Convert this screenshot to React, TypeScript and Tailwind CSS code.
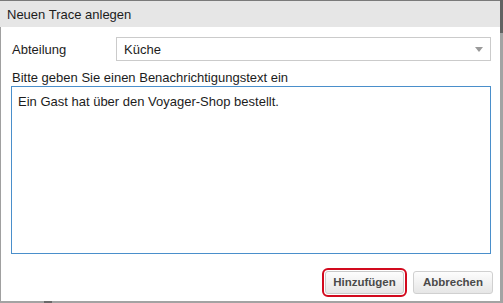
import { useState } from 'react';

const font = "font-['Liberation_Sans',Arial,sans-serif]";

export default function App() {
  const [text, setText] = useState('Ein Gast hat über den Voyager-Shop bestellt.');

  return (
    <div className={`w-[503px] h-[303px] flex flex-col bg-white text-[13px] leading-[15px] text-[#1c1c1c] ${font}`}>
      <div className="flex flex-1">
        {/* Dialog */}
        <div className="flex flex-1 flex-col">
          <div className="h-px bg-[#7a7a7a]" />
          <div className="h-[26px] bg-[#e6e6e6] px-[7px] flex items-center pt-px">
            Neuen Trace anlegen
          </div>

          <div className="flex flex-1 flex-col border-l border-[#a0a0a0] pt-[10px] pl-[10px] pr-[9px]">
            {/* Abteilung */}
            <div className="flex h-[24px] items-center">
              <span className="w-[105px] pl-px">Abteilung</span>
              <div className="flex flex-1 h-full items-center justify-between border border-[#cbcbcb] pl-[7px] pr-[7px]">
                <span>Küche</span>
                <span className="w-0 h-0 border-l-[4px] border-r-[4px] border-t-[5px] border-l-transparent border-r-transparent border-t-[#9a9a9a]" />
              </div>
            </div>

            <div className="mt-[9px] pl-px">Bitte geben Sie einen Benachrichtigungstext ein</div>

            <textarea
              value={text}
              onChange={(e) => setText(e.target.value)}
              className={`mt-px h-[168px] w-full resize-none border border-[#4a8fcb] px-[6px] pt-[7px] text-[13px] leading-[15px] text-[#1c1c1c] outline-none ${font}`}
            />

            {/* Buttons */}
            <div className="mt-[17px] flex justify-end gap-[9px] pr-[-2px] mr-[-2px]">
              <button className="w-[79px] h-[23px] rounded-[3px] border border-[#c9c9c9] bg-linear-to-b from-[#fdfdfd] to-[#e6e6e6] text-[11.5px] font-bold text-[#4a4a4a] outline-2 outline-offset-1 outline-[#d20a1e]">
                Hinzufügen
              </button>
              <button className="w-[80px] h-[23px] rounded-[3px] border border-[#d0d0d0] bg-linear-to-b from-[#fdfdfd] to-[#e6e6e6] text-[11.5px] font-bold text-[#4a4a4a]">
                Abbrechen
              </button>
            </div>
          </div>
        </div>

        {/* right edge */}
        <div className="w-[3px] flex flex-col">
          <div className="h-[33px] bg-[#626262]" />
          <div className="flex-1 bg-[#a3a3a3]" />
        </div>
      </div>

      {/* bottom edge */}
      <div className="h-[2px] bg-[#a3a3a3] flex">
        <div className="ml-[44px] w-[8px] bg-[#6a6a6a]" />
      </div>
    </div>
  );
}
